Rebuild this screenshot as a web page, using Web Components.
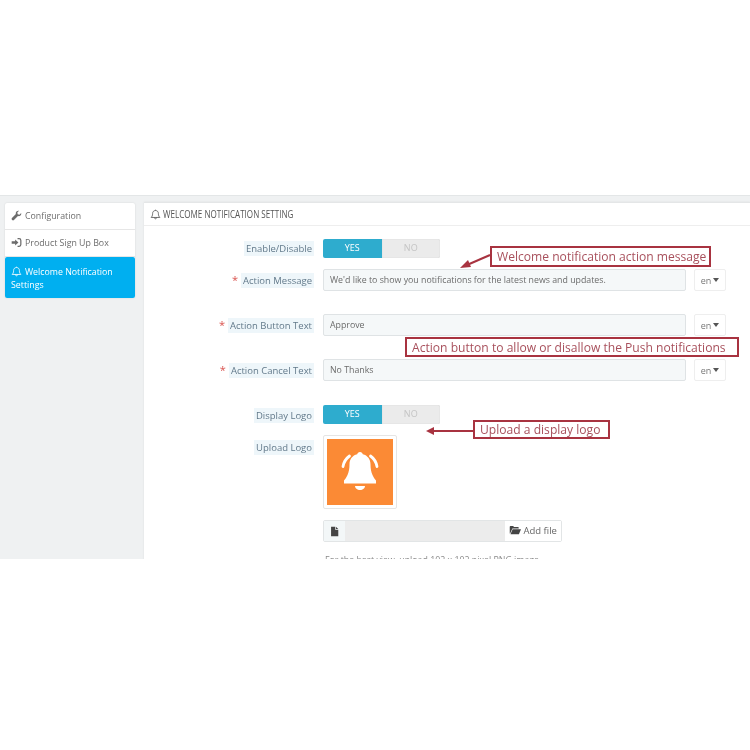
<!DOCTYPE html>
<html>
<head>
<meta charset="utf-8">
<title>Welcome notification setting</title>
<style>
  html, body { margin: 0; background: #fff; }
  body { font-family: "Open Sans", "Liberation Sans", sans-serif; color: #666; }
</style>
</head>
<body>

<admin-shot>
  <side-menu slot="menu">
    <menu-item icon="wrench">Configuration</menu-item>
    <menu-item icon="signin">Product Sign Up Box</menu-item>
    <menu-item icon="bell" active>Welcome Notification Settings</menu-item>
  </side-menu>

  <settings-panel title-text="WELCOME NOTIFICATION SETTING">
    <form-row label="Enable/Disable" label-top="3" gap="11"><toggle-switch></toggle-switch></form-row>
    <form-row label="Action Message" required gap="23"><lang-input>We'd like to show you notifications for the latest news and updates.</lang-input></form-row>
    <form-row label="Action Button Text" required gap="23"><lang-input>Approve</lang-input></form-row>
    <form-row label="Action Cancel Text" required gap="24"><lang-input>No Thanks</lang-input></form-row>
    <form-row label="Display Logo" gap="11"><toggle-switch></toggle-switch></form-row>
    <form-row label="Upload Logo" label-top="6" gap="11"><logo-preview></logo-preview></form-row>
    <form-row gap="12"><file-input></file-input></form-row>
    <form-row><help-text>For the best view, upload 102 x 102 pixel PNG image</help-text></form-row>
  </settings-panel>

  <call-out slot="notes" style="left:490px;top:50px;width:221px;height:21px">Welcome notification action message</call-out>
  <call-out slot="notes" style="left:405px;top:141px;width:334px;height:20px">Action button to allow or disallow the Push notifications</call-out>
  <call-out slot="notes" style="left:473px;top:224px;width:137px;height:19px">Upload a display logo</call-out>
  <note-arrows slot="notes"></note-arrows>
</admin-shot>

<script>
// iconos dibujados a mano, viewBox de 16x16
const ICONS = {
  wrench: '<path fill="currentColor" d="M14.8 4.3c.3 1.4 0 2.8-1 3.7-1 1-2.4 1.3-3.7.9L4.3 14.6c-.7.7-1.9.7-2.6 0l-.3-.3c-.7-.7-.7-1.9 0-2.6l5.7-5.8C6.7 4.600 7 3.200 8 2.200 9 1.200 10.400.9 11.700 1.200L9.200 3.700l.5 2.600 2.600.5z"/>',
  signin: '<path fill="currentColor" d="M1 6.200h5V3.500L10.800 8 6 12.500V9.800H1z"/><path fill="none" stroke="currentColor" stroke-width="1.800" d="M9.500 2.500h2.300c1.500 0 2.500 1 2.500 2.500v6c0 1.500-1 2.500-2.500 2.500H9.500"/>',
  bell: '<path fill="none" stroke="currentColor" stroke-width="1.200" stroke-linejoin="round" d="M8 2.200c-2.600 0-4.200 1.900-4.200 4.300 0 3-.9 4.600-2.100 5.800h12.600c-1.200-1.200-2.100-2.800-2.100-5.800 0-2.400-1.600-4.300-4.200-4.300z"/><path fill="none" stroke="currentColor" stroke-width="1.200" d="M6.500 12.500c0 1 .7 1.800 1.500 1.800s1.500-.8 1.500-1.800M8 2.200V1"/>',
  file: '<path fill="currentColor" d="M3 1h6v4.500h4.500V15H3z"/><path fill="currentColor" d="M10 1l3.500 3.500H10z"/>',
  folder: '<path fill="currentColor" d="M1 12.500V3.500C1 3 1.400 2.500 2 2.500h3.500l1.200 1.500H12c.5 0 1 .4 1 1v1H4.500L1.500 12.500z"/><path fill="currentColor" d="M4.800 7H16l-2.800 6.500H2z"/>'
}

function iconSvg(name, size) {
  return `<svg width="${size}" height="${size}" viewBox="0 0 16 16">${ICONS[name]}</svg>`
}

// clase base: cada componente devuelve su html y su css
class ShadowBox extends HTMLElement {
  constructor() {
    super()
    this.attachShadow({mode: 'open'})
  }
  getStyles() { return '' }
  getHtml() { return '<slot></slot>' }
  connectedCallback() {
    this.shadowRoot.innerHTML = `<style>${this.getStyles()}</style>${this.getHtml()}`
  }
}

// el marco gris de la captura, cortado abajo igual que la imagen original
class AdminShot extends ShadowBox {
  getStyles() {
    return `
      :host { display: block; position: relative; margin-top: 195px; height: 364px; overflow: hidden;
              background: #eff1f2; border-top: 1px solid #e3e6e7; box-sizing: border-box; filter: blur(.35px); }
      .layout { display: flex; height: 100%; padding: 6px 0 0 5px; box-sizing: border-box; gap: 9px; }
      .menu { flex: 0 0 130px; padding-top: 1px; }
      .main { flex: 1; min-width: 0; }
      .notes { position: absolute; inset: 0; pointer-events: none; }
    `
  }
  getHtml() {
    return `
      <div class="layout">
        <div class="menu"><slot name="menu"></slot></div>
        <div class="main"><slot></slot></div>
      </div>
      <div class="notes"><slot name="notes"></slot></div>
    `
  }
}

class SideMenu extends ShadowBox {
  getStyles() {
    return `:host { display: flex; flex-direction: column; background: #fff; border-radius: 2px;
                    box-shadow: 0 0 2px rgba(0,0,0,.12); }`
  }
}

class MenuItem extends ShadowBox {
  getStyles() {
    return `
      :host { display: block; font-size: 8.800px; line-height: 13px; color: #6c6c6c;
              padding: 7px 6px 6px; border-bottom: 1px solid #e6e6e6; }
      :host([active]) { background: #00aff0; color: #fff; border-bottom: 0; border-radius: 2px;
                        padding: 9px 6px 6px; }
      svg { vertical-align: -2px; margin-right: 3px; }
    `
  }
  getHtml() {
    return `${iconSvg(this.getAttribute('icon'), 11)}<slot></slot>`
  }
}

class SettingsPanel extends ShadowBox {
  getStyles() {
    return `
      :host { display: block; background: #fff; height: 100%;
              border-top: 1px solid #e4e6e7; box-shadow: 0 0 2px rgba(0,0,0,.08); }
      header { display: flex; align-items: center; height: 22px; padding-left: 6px; border-bottom: 1px solid #eeeeee;
               font-size: 10.500px; color: #555; white-space: nowrap; }
      header svg { flex: none; margin-right: 2px; }
      /* no hay fuente condensada instalada: se estrecha la Open Sans */
      header span { display: inline-block; transform: scaleX(.77); transform-origin: left center; }
      .body { padding-top: 13px; }
    `
  }
  getHtml() {
    return `
      <header>${iconSvg('bell', 11)}<span>${this.getAttribute('title-text')}</span></header>
      <div class="body"><slot></slot></div>
    `
  }
}

class FormRow extends ShadowBox {
  getStyles() {
    const top = this.getAttribute('label-top') || 4
    return `
      :host { display: flex; align-items: flex-start; margin-bottom: ${this.getAttribute('gap') || 0}px; }
      .label { flex: 0 0 170px; text-align: right; font-size: 9.500px; line-height: 14px; color: #62798a; padding-top: ${top}px; }
      .label span { background: #eef6fa; padding: 1px 2px; }
      .label b { color: #d9534f; font-weight: 400; font-size: 11px; margin-right: 3px; }
      .field { margin-left: 9px; flex: 1; min-width: 0; }
    `
  }
  getHtml() {
    const label = this.getAttribute('label')
    const star = this.hasAttribute('required') ? '<b>*</b>' : ''
    return `
      <div class="label">${star}${label ? `<span>${label}</span>` : ''}</div>
      <div class="field"><slot></slot></div>
    `
  }
}

class ToggleSwitch extends ShadowBox {
  getStyles() {
    return `
      :host { display: flex; width: 117px; height: 19px; font-size: 9px; line-height: 18px; text-align: center; }
      div { flex: 1; }
      .yes { background: #2eacce; color: #fff; border-radius: 2px 0 0 2px; }
      .no { background: #ebebeb; color: #c4c4c4; border-radius: 0 2px 2px 0; box-shadow: inset 0 0 1px rgba(0,0,0,.2); }
    `
  }
  getHtml() {
    return `<div class="yes">YES</div><div class="no">NO</div>`
  }
}

class LangInput extends ShadowBox {
  getStyles() {
    return `
      :host { display: flex; align-items: stretch; height: 22px; font-size: 8.800px; gap: 8px; width: 403px; }
      .text { flex: 0 0 363px; box-sizing: border-box; padding-left: 6px; line-height: 21px; color: #6b6b6b;
              background: #f5f8f9; border: 1px solid #dfe3e5; border-radius: 2px; white-space: nowrap; overflow: hidden; }
      .lang { flex: 0 0 32px; box-sizing: border-box; background: #fff; border: 1px solid #eeeeee; border-radius: 2px;
              line-height: 21px; color: #777; text-align: center; font-size: 9px; white-space: nowrap; }
      .lang i { display: inline-block; margin-left: 2px; vertical-align: 2px; border: 3.500px solid transparent;
                border-top: 4px solid #555; border-bottom: 0; }
    `
  }
  getHtml() {
    return `<div class="text"><slot></slot></div><div class="lang">en<i></i></div>`
  }
}

class LogoPreview extends ShadowBox {
  getStyles() {
    return `
      :host { display: block; width: 74px; height: 74px; box-sizing: border-box; padding: 3px; background: #fff;
              border: 1px solid #e5e5e5; border-radius: 2px; }
      svg { display: block; width: 100%; height: 100%; background: #fb8a35; }
    `
  }
  getHtml() {
    return `<svg viewBox="0 0 66 66">
      <path fill="#fff" d="M33 13c1.500 0 2.600 1 2.800 2.300 4.800 1.200 7.700 5 7.700 10.200 0 4 .7 7.500 2 10.500 1 2.300 2 4 3.500 5.500v3H17v-3c1.500-1.500 2.500-3.200 3.500-5.500 1.300-3 2-6.500 2-10.500 0-5.200 2.900-9 7.700-10.200.2-1.300 1.300-2.300 2.800-2.300z"/>
      <path fill="#fff" d="M28 47h10c0 2.200-2.200 4-5 4s-5-1.800-5-4z"/>
      <path fill="none" stroke="#fff" stroke-width="2.800" stroke-linecap="round" d="M22.500 17C19 19.500 16.800 23 16 27.500M43.500 17c3.500 2.500 5.700 6 6.500 10.500"/>
    </svg>`
  }
}

class FileInput extends ShadowBox {
  getStyles() {
    return `
      :host { display: flex; width: 239px; height: 22px; box-sizing: border-box; border: 1px solid #e2e5e6;
              border-radius: 2px; font-size: 9.500px; color: #666; line-height: 20px; }
      .ico { flex: 0 0 21px; display: flex; align-items: center; justify-content: center; background: #f3f7f8; color: #444; }
      .name { flex: 1; background: #ececec; }
      .add { flex: 0 0 56px; background: #fff; text-align: center; white-space: nowrap; }
      .add svg { vertical-align: -2px; color: #444; }
    `
  }
  getHtml() {
    return `
      <div class="ico">${iconSvg('file', 11)}</div>
      <div class="name"></div>
      <div class="add">${iconSvg('folder', 12)} Add file</div>
    `
  }
}

class HelpText extends ShadowBox {
  getStyles() {
    return `:host { display: block; font-size: 8.800px; line-height: 12px; color: #8a8a8a; white-space: nowrap; padding-left: 2px; }`
  }
}

// notas rojas encima de la captura
class CallOut extends ShadowBox {
  getStyles() {
    return `
      :host { position: absolute; display: flex; align-items: center; box-sizing: border-box; padding-left: 5px;
              background: #fff; border: 2px solid #a83340; color: #a8505c; font-size: 12.100px; white-space: nowrap; }
    `
  }
}

class NoteArrows extends ShadowBox {
  getStyles() {
    return `:host { position: absolute; inset: 0; display: block; } svg { display: block; }`
  }
  getHtml() {
    return `<svg width="750" height="364">
      <path d="M490 59L467 69" stroke="#a83340" stroke-width="2" fill="none"/>
      <path d="M460 72l8-8 3 7z" fill="#a83340"/>
      <path d="M473 235H433" stroke="#a83340" stroke-width="2" fill="none"/>
      <path d="M426 235l8-4v8z" fill="#a83340"/>
    </svg>`
  }
}

customElements.define('admin-shot', AdminShot)
customElements.define('side-menu', SideMenu)
customElements.define('menu-item', MenuItem)
customElements.define('settings-panel', SettingsPanel)
customElements.define('form-row', FormRow)
customElements.define('toggle-switch', ToggleSwitch)
customElements.define('lang-input', LangInput)
customElements.define('logo-preview', LogoPreview)
customElements.define('file-input', FileInput)
customElements.define('help-text', HelpText)
customElements.define('call-out', CallOut)
customElements.define('note-arrows', NoteArrows)
</script>
</body>
</html>
